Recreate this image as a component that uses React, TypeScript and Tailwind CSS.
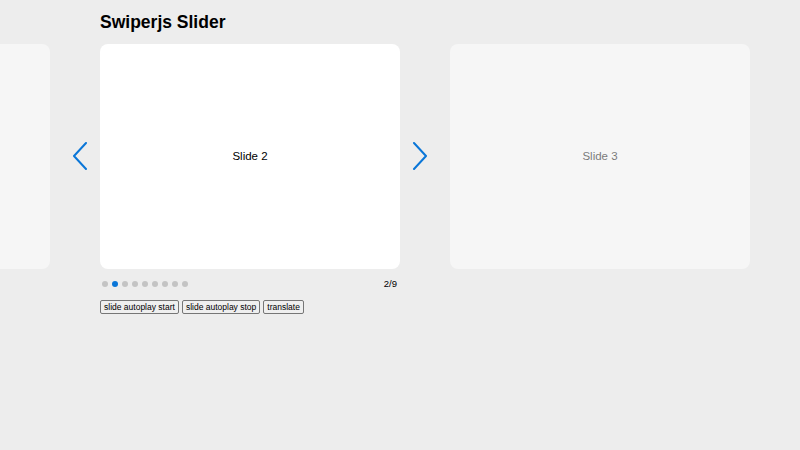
import { useState } from 'react';

const slides = [1, 2, 3, 4, 5, 6, 7, 8, 9];

function Chevron({ dir }: { dir: 'left' | 'right' }) {
  return (
    <svg width="16" height="28" viewBox="0 0 16 28" fill="none">
      <path
        d={dir === 'left' ? 'M14 1 L2 14 L14 27' : 'M2 1 L14 14 L2 27'}
        stroke="#0a76d8"
        strokeWidth="2"
        strokeLinecap="round"
        strokeLinejoin="round"
      />
    </svg>
  );
}

export default function App() {
  const [active, setActive] = useState(1);

  return (
    <div className="min-h-[450px] w-[800px] bg-[#ededed] overflow-hidden font-['Liberation_Sans',Arial,sans-serif] text-black">
      <h1 className="pl-[100px] pt-[11px] text-[17.5px] leading-[22px] font-bold">Swiperjs Slider</h1>

      <div className="relative mt-[11px] h-[225px]">
        <div className="flex gap-[50px] ml-[-250px]">
          {[0, 1, 2].map((i) => (
            <div
              key={i}
              className={
                'w-[300px] h-[225px] shrink-0 rounded-lg bg-white flex items-center justify-center text-[11.5px] ' +
                (i === 1 ? '' : 'opacity-50')
              }
            >
              Slide {i + 1}
            </div>
          ))}
        </div>
        <button className="absolute left-[72px] top-[98px]">
          <Chevron dir="left" />
        </button>
        <button className="absolute left-[412px] top-[98px]">
          <Chevron dir="right" />
        </button>
      </div>

      <div className="w-[300px] ml-[100px] mt-[9px] flex items-center justify-between h-[12px]">
        <div className="flex gap-[4px] pl-[2px]">
          {slides.map((s, i) => (
            <button
              key={s}
              onClick={() => setActive(i)}
              className={'w-[6px] h-[6px] rounded-full ' + (i === active ? 'bg-[#0a76d8]' : 'bg-[#c4c4c4]')}
            />
          ))}
        </div>
        <span className="text-[9.5px] pr-[3px]">{active + 1}/9</span>
      </div>

      <div className="ml-[100px] mt-[10px] flex gap-[3px] text-[8.5px]">
        <button className="border border-[#767676] bg-[#efefef] px-[3px] h-[14px] leading-[12px] rounded-[2px]">slide autoplay start</button>
        <button className="border border-[#767676] bg-[#efefef] px-[3px] h-[14px] leading-[12px] rounded-[2px]">slide autoplay stop</button>
        <button className="border border-[#767676] bg-[#efefef] px-[3px] h-[14px] leading-[12px] rounded-[2px]">translate</button>
      </div>
    </div>
  );
}
